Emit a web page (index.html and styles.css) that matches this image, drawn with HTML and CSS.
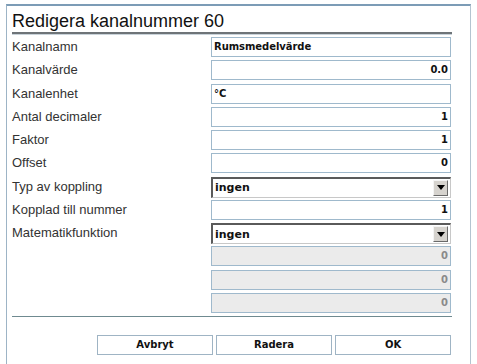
FILE: index.html
```html
<!DOCTYPE html>
<html lang="sv">
<head>
<meta charset="utf-8">
<title>Redigera kanalnummer 60</title>
<link rel="stylesheet" href="styles.css">
</head>
<body>
<div class="frame">
  <h1 class="title">Redigera kanalnummer 60</h1>
  <div class="form">
    <div class="label">Kanalnamn</div>
    <div class="field">Rumsmedelvärde</div>
    <div class="label">Kanalvärde</div>
    <div class="field num">0.0</div>
    <div class="label">Kanalenhet</div>
    <div class="field">°C</div>
    <div class="label">Antal decimaler</div>
    <div class="field num">1</div>
    <div class="label">Faktor</div>
    <div class="field num">1</div>
    <div class="label">Offset</div>
    <div class="field num">0</div>
    <div class="label">Typ av koppling</div>
    <div class="select"><span class="sel-text">ingen</span><span class="sel-btn"><svg width="8" height="5" viewBox="0 0 8 5"><path d="M0 0H8L4 5Z" fill="#000"/></svg></span></div>
    <div class="label">Kopplad till nummer</div>
    <div class="field num">1</div>
    <div class="label">Matematikfunktion</div>
    <div class="select"><span class="sel-text">ingen</span><span class="sel-btn"><svg width="8" height="5" viewBox="0 0 8 5"><path d="M0 0H8L4 5Z" fill="#000"/></svg></span></div>
    <div class="label"></div>
    <div class="field num disabled">0</div>
    <div class="label"></div>
    <div class="field num disabled">0</div>
    <div class="label"></div>
    <div class="field num disabled">0</div>
  </div>
  <div class="sep"></div>
  <div class="buttons">
    <div class="btn">Avbryt</div>
    <div class="btn">Radera</div>
    <div class="btn">OK</div>
  </div>
</div>
</body>
</html>
```
FILE: styles.css
```css
html, body {
  margin: 0;
  padding: 0;
  background: #ffffff;
  overflow: hidden;
}
body {
  width: 477px;
  height: 364px;
}
.frame {
  margin: 4px 0 0 6px;
  width: 440px;
  height: 358px;
  border-top: 2px solid #7c9cb6;
  border-left: 1px solid #9db4c6;
  border-right: 1px solid #b4c4d0;
  padding: 0 18px 0 5px;
  box-sizing: content-box;
  font-family: "Liberation Sans", Arial, sans-serif;
  color: #2a2a2a;
}
.title {
  margin: 0 0 3px 0;
  padding-top: 4px;
  height: 22px;
  line-height: 22px;
  font-size: 18px;
  font-weight: normal;
  color: #111;
  border-bottom: 2px solid #6e7478;
  box-shadow: 0 1px 0 #c9d3da;
}
.form {
  display: grid;
  grid-template-columns: 199px 240px;
  grid-auto-rows: 20px;
  row-gap: 3.25px;
}
.label {
  font-size: 13px;
  line-height: 20px;
  color: #333;
}
.field {
  box-sizing: border-box;
  height: 20px;
  border: 1px solid #9fb9cc;
  background: #fff;
  font-family: "DejaVu Sans", Verdana, sans-serif;
  font-weight: bold;
  font-size: 10px;
  letter-spacing: -0.05px;
  line-height: 18px;
  padding: 0 2px;
  color: #111;
}
.num {
  text-align: right;
}
.disabled {
  background: #ebebeb;
  color: #8a8a8a;
}
.select {
  box-sizing: border-box;
  height: 21px;
  display: flex;
  align-items: center;
  justify-content: space-between;
  border-top: 2px solid #5a5a5a;
  border-left: 2px solid #5a5a5a;
  border-right: 1px solid #c8c8c8;
  border-bottom: 1px solid #c8c8c8;
  background: #fff;
  padding: 0 2px 0 2px;
  font-family: "DejaVu Sans", Verdana, sans-serif;
  font-weight: bold;
  font-size: 11px;
  color: #111;
}
.sel-btn {
  width: 15px;
  height: 16px;
  box-sizing: border-box;
  background: #d6d3ce;
  border-top: 1px solid #f4f4f4;
  border-left: 1px solid #f4f4f4;
  border-right: 1px solid #6a6a6a;
  border-bottom: 1px solid #6a6a6a;
  display: flex;
  align-items: center;
  justify-content: center;
}
.sep {
  margin-top: 3px;
  height: 0;
  border-top: 1px solid #6f8a90;
}
.buttons {
  display: flex;
  justify-content: flex-end;
  gap: 3px;
  margin-top: 18px;
  padding-right: 1px;
}
.btn {
  box-sizing: border-box;
  width: 116px;
  height: 20px;
  border: 1px solid #9fb4c4;
  background: #fff;
  text-align: center;
  font-family: "DejaVu Sans", Verdana, sans-serif;
  font-weight: bold;
  font-size: 10px;
  line-height: 18px;
  color: #111;
}
```
